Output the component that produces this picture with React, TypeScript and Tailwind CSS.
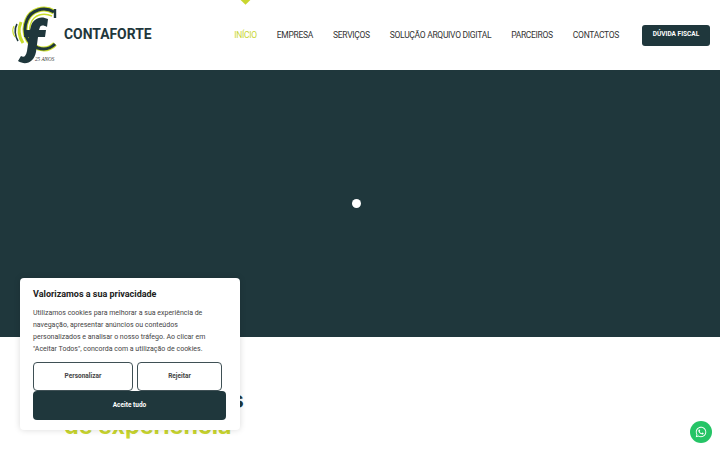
import React from 'react';
import { FaWhatsapp } from 'react-icons/fa';

const navItems = ['INÍCIO', 'EMPRESA', 'SERVIÇOS', 'SOLUÇÃO ARQUIVO DIGITAL', 'PARCEIROS', 'CONTACTOS'];

const Logo = () => (
  <svg width="48" height="60" viewBox="11 5 48 60" className="shrink-0">
    {/* rings, drawn in page coordinates */}
    <path d="M54 12 C44 6 31 10 27 20 C22 32 27 44 38 48 C44 50 50 49 55 44" fill="none" stroke="#c9dc2a" strokeWidth="5" />
    <path d="M54 12 C44 6 31 10 27 20 C22 32 27 44 38 48 C44 50 50 49 55 44" fill="none" stroke="#1f373c" strokeWidth="3" />
    <path d="M52 16 C43 12 34 15 31 23 C28 30 30 38 36 43" fill="none" stroke="#c9dc2a" strokeWidth="1.4" />
    <path d="M55 9 L55 18" stroke="#1f373c" strokeWidth="2.4" />
    <path d="M21 22 C18 29 19 37 23 43" fill="none" stroke="#c9dc2a" strokeWidth="3" />
    <path d="M17 24 C14 29 15 36 18 41" fill="none" stroke="#1f373c" strokeWidth="1.6" />
    <path d="M14 26 C12 30 12 33 15 37" fill="none" stroke="#c9dc2a" strokeWidth="1.2" />
    {/* the f mark */}
    <path d="M48 19 C40 15 33 19 31 26 L30 30 L25 30 L24 37 L29 37 L27 51 C26 56 24 58 21 56 L18 61 C26 66 34 62 36 52 L38 37 L45 37 L46 30 L39 30 L40 27 C41 25 44 25 47 27 Z" fill="#1f373c" />
    <text x="35" y="61" fontSize="5.2" fontStyle="italic" fill="#333" fontFamily="'Liberation Serif', serif">25 ANOS</text>
  </svg>
);

export default function App() {
  return (
    <div className="relative h-[450px] w-[720px] overflow-hidden bg-white font-['Roboto',sans-serif]">
      <header className="relative flex h-[70px] items-center bg-white pl-[11px] pr-[10px]">
        <Logo />
        <span className="ml-[5px] text-[13.9px] leading-none font-bold text-[#1f373c]">CONTAFORTE</span>
        <nav className="ml-auto flex items-center gap-5 text-[8.5px] tracking-[-0.3px] whitespace-nowrap text-[#333]">
          {navItems.map((item, i) => (
            <a key={item} className={i === 0 ? 'text-[#c9d62f]' : ''}>
              {item}
            </a>
          ))}
        </nav>
        <button className="ml-[23px] h-[21px] w-[68px] rounded-[3px] bg-[#1f373c] text-[6.5px] font-bold text-white">DÚVIDA FISCAL</button>
        <div className="absolute top-[-6px] left-[241px] h-[9px] w-[9px] rotate-45 bg-[#c9d62f]" />
      </header>

      <section className="flex h-[267px] items-center justify-center bg-[#1f373c] pr-2">
        <div className="h-[9px] w-[9px] rounded-full bg-white" />
      </section>

      <section className="pt-[50px] pl-16 font-['Inter',sans-serif] text-[23.3px] leading-[26px] font-bold">
        <p className="tracking-[-0.35px] text-[#1f373c]">Mais de 25 anos</p>
        <p className="text-[#c9d62f]">de experiência</p>
      </section>

      <div className="absolute top-[278px] left-5 h-[152px] w-[220px] rounded bg-white px-[13px] pt-[10px] shadow-[0_0_6px_rgba(0,0,0,0.15)]">
        <h2 className="text-[9px] leading-[12px] font-bold text-[#212121]">Valorizamos a sua privacidade</h2>
        <p className="mt-[7px] text-[7px] leading-[12px] whitespace-nowrap text-[#444]">
          Utilizamos cookies para melhorar a sua experiência de<br />
          navegação, apresentar anúncios ou conteúdos<br />
          personalizados e analisar o nosso tráfego. Ao clicar em<br />
          "Aceitar Todos", concorda com a utilização de cookies.
        </p>
        <div className="mt-[7px] flex gap-1">
          <button className="h-[29px] w-[100px] rounded border-[1.5px] border-[#3f5055] bg-white text-[6.5px] font-bold text-[#444]">Personalizar</button>
          <button className="h-[29px] w-[85px] rounded border-[1.5px] border-[#3f5055] bg-white text-[6.5px] font-bold text-[#444]">Rejeitar</button>
        </div>
        <button className="block h-[29px] w-[193px] rounded bg-[#1f373c] text-[6.5px] font-bold text-white">Aceite tudo</button>
      </div>

      <div className="absolute top-[421px] left-[690px] flex h-[22px] w-[22px] items-center justify-center rounded-full bg-[#25c466]">
        <FaWhatsapp className="h-3 w-3 text-white" />
      </div>
    </div>
  );
}
